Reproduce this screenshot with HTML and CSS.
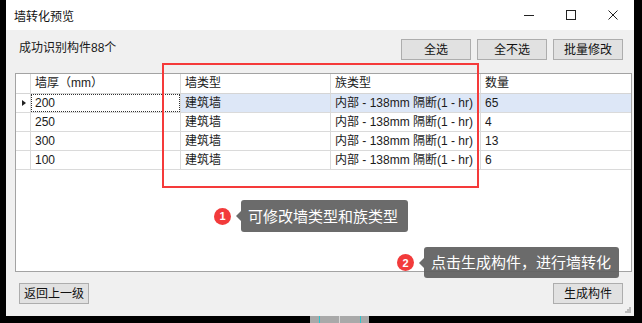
FILE: index.html
```html
<!DOCTYPE html>
<html lang="zh-CN">

<head>
  <meta charset="UTF-8">
  <meta name="viewport" content="width=device-width, initial-scale=1.0">
  <title>墙转化预览</title>
  <link rel="stylesheet" href="styles.css">
</head>

<body>
  <div class="window">
    <header class="titlebar">
      <span class="title">墙转化预览</span>
      <div class="controls">
        <span class="ctl">
          <svg width="10" height="10" viewBox="0 0 10 10"><path d="M0 5.5h10" stroke="#222" stroke-width="1"/></svg>
        </span>
        <span class="ctl">
          <svg width="10" height="10" viewBox="0 0 10 10"><rect x="0.5" y="0.5" width="9" height="9" fill="none" stroke="#222" stroke-width="1"/></svg>
        </span>
        <span class="ctl">
          <svg width="10" height="10" viewBox="0 0 10 10"><path d="M0.5 0.5l9 9M9.5 0.5l-9 9" stroke="#222" stroke-width="1"/></svg>
        </span>
      </div>
    </header>

    <section class="toolbar">
      <span class="summary">成功识别构件88个</span>
      <div class="actions">
        <button class="btn">全选</button>
        <button class="btn">全不选</button>
        <button class="btn">批量修改</button>
      </div>
    </section>

    <section class="grid">
      <div class="row head">
        <div class="cell rh"></div>
        <div class="cell">墙厚（mm）</div>
        <div class="cell">墙类型</div>
        <div class="cell">族类型</div>
        <div class="cell last">数量</div>
      </div>
      <div class="row selected">
        <div class="cell rh"><span class="arrow"></span></div>
        <div class="cell focus"><span>200</span></div>
        <div class="cell">建筑墙</div>
        <div class="cell">内部 - 138mm 隔断(1 - hr)</div>
        <div class="cell last">65</div>
      </div>
      <div class="row">
        <div class="cell rh"></div>
        <div class="cell">250</div>
        <div class="cell">建筑墙</div>
        <div class="cell">内部 - 138mm 隔断(1 - hr)</div>
        <div class="cell last">4</div>
      </div>
      <div class="row">
        <div class="cell rh"></div>
        <div class="cell">300</div>
        <div class="cell">建筑墙</div>
        <div class="cell">内部 - 138mm 隔断(1 - hr)</div>
        <div class="cell last">13</div>
      </div>
      <div class="row">
        <div class="cell rh"></div>
        <div class="cell">100</div>
        <div class="cell">建筑墙</div>
        <div class="cell">内部 - 138mm 隔断(1 - hr)</div>
        <div class="cell last">6</div>
      </div>
    </section>

    <footer class="bottom">
      <button class="btn">返回上一级</button>
      <button class="btn">生成构件</button>
    </footer>

    <!-- annotations laid over the dialog -->
    <div class="highlight"></div>

    <div class="callout callout-1">
      <span class="badge">1</span>
      <span class="tip">可修改墙类型和族类型</span>
    </div>

    <div class="callout callout-2">
      <span class="badge">2</span>
      <span class="tip">点击生成构件，进行墙转化</span>
    </div>

    <svg class="grip" width="6" height="6" viewBox="0 0 6 6">
      <rect x="4" y="0" width="2" height="2" fill="#bbb"/>
      <rect x="2" y="2" width="2" height="2" fill="#bbb"/>
      <rect x="4" y="2" width="2" height="2" fill="#bbb"/>
      <rect x="0" y="4" width="2" height="2" fill="#bbb"/>
      <rect x="2" y="4" width="2" height="2" fill="#bbb"/>
      <rect x="4" y="4" width="2" height="2" fill="#bbb"/>
    </svg>
  </div>

  <div class="dock"></div>
</body>

</html>
```

FILE: styles.css
```css
* {
  margin: 0;
  padding: 0;
  box-sizing: border-box;
  font-family: 'Liberation Sans', 'Noto Sans CJK SC', sans-serif;
}

html,
body {
  width: 100%;
  height: 100%;
}

body {
  background: #000;
  display: flex;
  flex-direction: column;
  overflow: hidden;
  font-size: 12px;
  color: #1a1a1a;
}

.window {
  position: relative;
  margin-left: 6px;
  width: 628px;
  height: 316px;
  flex-shrink: 0;
  background: #f0f0f0;
  display: flex;
  flex-direction: column;
}

.titlebar {
  height: 30px;
  background: #fff;
  display: flex;
  align-items: center;
  padding-left: 8px;
}

.title {
  flex: 1;
  font-size: 12px;
  color: #111;
}

.controls {
  display: flex;
}

.ctl {
  width: 42px;
  height: 30px;
  display: flex;
  align-items: center;
  justify-content: center;
}

.toolbar {
  height: 43px;
  display: flex;
  align-items: flex-start;
  justify-content: space-between;
  padding: 9px 11px 0 13px;
}

.summary {
  line-height: 17px;
  margin-top: 1px;
}

.actions {
  display: flex;
  gap: 6px;
}

.btn {
  width: 70px;
  height: 21px;
  background: #e1e1e1;
  border: 1px solid #adadad;
  font-size: 12px;
  color: #111;
  line-height: 18px;
}

.grid {
  margin-left: 9px;
  width: 617px;
  height: 199px;
  background: #fff;
  border: 1px solid #a3a3a3;
}

.row {
  display: grid;
  grid-template-columns: 15px 150px 150px 150px 1fr;
  height: 19px;
}

.row.head {
  height: 20px;
}

.cell {
  border-right: 1px solid #dadada;
  border-bottom: 1px solid #dadada;
  padding-left: 4px;
  line-height: 18px;
  white-space: nowrap;
  overflow: hidden;
  color: #1a1a1a;
}

.row.head .cell {
  line-height: 19px;
  background: #fff;
  border-bottom-color: #d5d5d5;
}

.cell.last {
  border-right: 0;
}

.cell.rh {
  padding-left: 0;
  display: flex;
  align-items: center;
  justify-content: center;
}

.arrow {
  width: 0;
  height: 0;
  border-top: 3.5px solid transparent;
  border-bottom: 3.5px solid transparent;
  border-left: 4px solid #222;
  margin-left: 1px;
}

.row.selected .cell {
  background: #dde7f7;
}

.row.selected .cell.rh,
.row.selected .cell.focus {
  background: #fff;
}

.cell.focus {
  padding: 0;
}

.cell.focus span {
  display: block;
  height: 18px;
  padding-left: 3px;
  line-height: 16px;
  border: 1px dotted #333;
}

.bottom {
  flex: 1;
  display: flex;
  justify-content: space-between;
  align-items: flex-start;
  padding: 11px 11px 0 13px;
}

.highlight {
  position: absolute;
  left: 156px;
  top: 63px;
  width: 317px;
  height: 125px;
  border: 2px solid #f53a3a;
}

.callout {
  position: absolute;
  display: flex;
  align-items: center;
}

.callout-1 {
  left: 208px;
  top: 200px;
}

.callout-2 {
  left: 391px;
  top: 247px;
}

.badge {
  width: 17px;
  height: 17px;
  border-radius: 50%;
  background: #f23b3b;
  color: #fff;
  font-size: 11px;
  font-weight: bold;
  display: flex;
  align-items: center;
  justify-content: center;
  margin-right: 10px;
}

.tip {
  position: relative;
  height: 32px;
  line-height: 31px;
  padding: 0 10px 0 7px;
  background: rgba(96, 96, 96, 0.93);
  border-radius: 3px;
  color: #fff;
  font-size: 15px;
  font-family: 'Noto Sans CJK SC', sans-serif;
}

.callout-2 .tip {
  height: 31px;
  line-height: 30px;
  padding: 0 8px 0 7px;
}

.tip::before {
  content: '';
  position: absolute;
  left: -5px;
  top: 50%;
  margin-top: -5px;
  border-top: 5px solid transparent;
  border-bottom: 5px solid transparent;
  border-right: 5px solid rgba(96, 96, 96, 0.93);
}

.grip {
  position: absolute;
  right: 3px;
  bottom: 3px;
}

.dock {
  margin-left: 310px;
  width: 59px;
  height: 7px;
  background: linear-gradient(to right,
      #a9a9a9 0, #a9a9a9 9px, #2ec4d0 9px, #2ec4d0 10px,
      #a9a9a9 10px, #a9a9a9 29px, #d8d8d8 29px, #d8d8d8 30px,
      #a9a9a9 30px, #a9a9a9 50px, #2ec4d0 50px, #2ec4d0 51px,
      #a9a9a9 51px);
}
```
